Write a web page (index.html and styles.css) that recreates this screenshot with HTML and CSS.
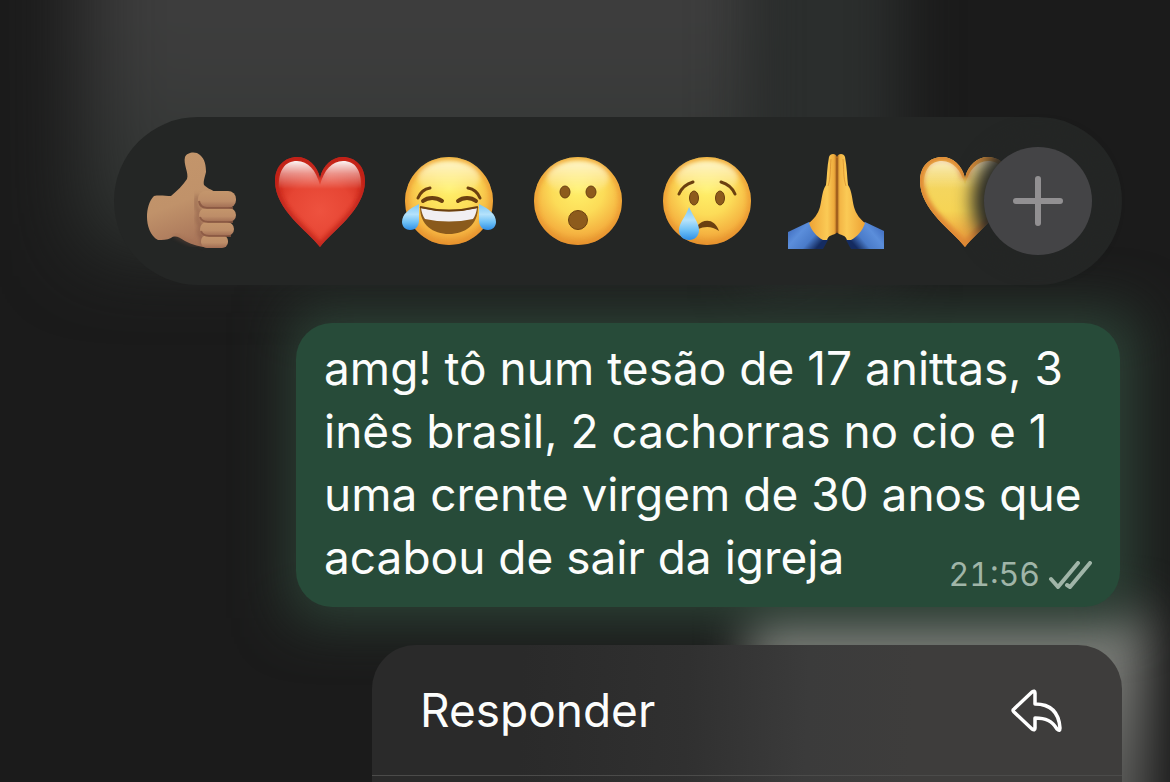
FILE: index.html
```html
<!DOCTYPE html>
<html lang="pt-BR">
<head>
<meta charset="utf-8">
<meta name="viewport" content="width=device-width, initial-scale=1">
<title>Mensagem</title>
<link rel="stylesheet" href="styles.css">
</head>
<body>
<div class="backdrop" aria-hidden="true">
  <div class="haze haze-top"></div>
  <div class="haze haze-teal"></div>
  <div class="haze haze-light"></div>
  <div class="haze haze-bubble"></div>
</div>
<svg class="defs" aria-hidden="true">
  <defs>
    <radialGradient id="face" cx="0.5" cy="0.36" r="0.66">
      <stop offset="0" stop-color="#fff16a"/><stop offset="0.45" stop-color="#fcdc58"/>
      <stop offset="0.78" stop-color="#f5b341"/><stop offset="1" stop-color="#e38c2c"/>
    </radialGradient>
    <linearGradient id="shine" x1="0" y1="0" x2="0" y2="1">
      <stop offset="0" stop-color="#fff" stop-opacity="0.9"/><stop offset="1" stop-color="#fff" stop-opacity="0"/>
    </linearGradient>
    <linearGradient id="heartGloss" x1="0" y1="0" x2="0" y2="1">
      <stop offset="0" stop-color="#fff" stop-opacity="0.95"/><stop offset="0.45" stop-color="#fff" stop-opacity="0.45"/><stop offset="1" stop-color="#fff" stop-opacity="0"/>
    </linearGradient>
    <radialGradient id="red" cx="0.5" cy="0.6" r="0.6">
      <stop offset="0" stop-color="#ee523f"/><stop offset="0.6" stop-color="#e64533"/><stop offset="1" stop-color="#cf2a1b"/>
    </radialGradient>
    <linearGradient id="gold" x1="0" y1="0" x2="0" y2="1">
      <stop offset="0" stop-color="#f2d76a"/><stop offset="0.6" stop-color="#f6d455"/><stop offset="1" stop-color="#ea8f36"/>
    </linearGradient>
    <linearGradient id="tear" x1="0" y1="0" x2="0" y2="1">
      <stop offset="0" stop-color="#7cc6f4"/><stop offset="0.4" stop-color="#b5e2fb"/><stop offset="0.7" stop-color="#6fc1f6"/><stop offset="1" stop-color="#2f8fe6"/>
    </linearGradient>
    <linearGradient id="skin" x1="0" y1="0" x2="0.3" y2="1">
      <stop offset="0" stop-color="#c4966b"/><stop offset="0.6" stop-color="#c0926a"/><stop offset="1" stop-color="#ab785b"/>
    </linearGradient>
    <linearGradient id="finger" x1="0" y1="0" x2="0" y2="1">
      <stop offset="0" stop-color="#c4966c"/><stop offset="0.6" stop-color="#bd8d68"/><stop offset="1" stop-color="#a06c53"/>
    </linearGradient>
    <linearGradient id="palmL" x1="0" y1="0" x2="1" y2="0">
      <stop offset="0" stop-color="#eda235"/><stop offset="0.65" stop-color="#fbca55"/><stop offset="0.9" stop-color="#eeaa3c"/><stop offset="1" stop-color="#a5601c"/>
    </linearGradient>
    <linearGradient id="palmR" x1="1" y1="0" x2="0" y2="0">
      <stop offset="0" stop-color="#eda235"/><stop offset="0.65" stop-color="#fbca55"/><stop offset="0.9" stop-color="#f3b545"/><stop offset="1" stop-color="#a5601c"/>
    </linearGradient>
    <linearGradient id="sleeveL" x1="0" y1="0" x2="1" y2="0.6">
      <stop offset="0" stop-color="#3560b4"/><stop offset="0.4" stop-color="#5b8edb"/><stop offset="0.7" stop-color="#4a7bc9"/><stop offset="0.95" stop-color="#142b60"/>
    </linearGradient>
    <linearGradient id="sleeveR" x1="1" y1="0" x2="0" y2="0.6">
      <stop offset="0" stop-color="#3560b4"/><stop offset="0.4" stop-color="#5b8edb"/><stop offset="0.7" stop-color="#4a7bc9"/><stop offset="0.95" stop-color="#142b60"/>
    </linearGradient>
    <filter id="soft" x="-20%" y="-20%" width="140%" height="140%"><feGaussianBlur stdDeviation="2"/></filter>
    <filter id="faint" x="-20%" y="-20%" width="140%" height="140%"><feGaussianBlur stdDeviation="0.7"/></filter>
    <clipPath id="faceClip"><circle cx="48" cy="48" r="44"/></clipPath>
    <path id="heart" d="M48 94C36 78 3 57 3 28C3 13 13 4 25 4C36 4 45 12 48 25C51 12 60 4 71 4C83 4 93 13 93 28C93 57 60 78 48 94Z"/>
    <path id="heartShine" d="M7 36C6 17 13 8 25 8C36 8 44 17 48 32C52 17 60 8 71 8C83 8 90 17 89 36Z"/>
    <clipPath id="heartClip"><use href="#heart"/></clipPath>
    <g id="head">
      <circle cx="48" cy="48" r="44" fill="url(#face)"/>
      <circle cx="48" cy="48" r="43" fill="none" stroke="#e8932e" stroke-width="4" opacity="0.7" filter="url(#soft)" clip-path="url(#faceClip)"/>
      <ellipse cx="48" cy="25" rx="31" ry="17" fill="url(#shine)" opacity="0.75" filter="url(#soft)"/>
    </g>
  </defs>
</svg>
<main class="overlay">
  <div class="reactions" role="toolbar" aria-label="Reações">
    <div class="emoji-list">
      <button class="emoji" type="button" aria-label="Joinha">
        <svg viewBox="0 0 96 96">
          <path fill="url(#skin)" d="M11 43C16 42 23 43 28 43C34 38 40 32 44 26C46 20 40 11 42 4C44-1 53-2 57 2C62 6 63 13 63 19C62 24 60 28 61 32C65 36 68 36 72 39L80 65L74 94C62 96 50 92 42 88C36 84 32 82 28 85C24 87 19 87 15 87C7 83 4 72 4 64C4 56 6 48 11 43Z"/>
          <path d="M31 82C36 84 44 91 58 92" fill="none" stroke="#94604a" stroke-width="3" opacity="0.4" filter="url(#soft)"/>
          <path d="M55 42C51 50 53 57 57 59C53 64 54 70 58 72C55 77 56 83 59 84V93" fill="none" stroke="#7d4e3d" stroke-width="3" opacity="0.6" filter="url(#soft)"/>
          <g fill="url(#finger)">
            <rect x="58" y="82" width="27" height="13" rx="6"/>
            <rect x="57" y="69" width="34" height="14" rx="7"/>
            <rect x="56" y="55" width="37" height="14" rx="7"/>
            <rect x="55" y="38" width="38" height="17" rx="8"/>
          </g>
          <g fill="none" stroke="#875541" stroke-width="2" filter="url(#faint)" opacity="0.8">
            <path d="M56 48Q57 55 64 55H90M57 64Q59 69 65 69H90M58 78Q60 83 66 83H88"/>
          </g>
        </svg>
      </button>
      <button class="emoji" type="button" aria-label="Coração vermelho">
        <svg viewBox="0 0 96 96">
          <use href="#heart" fill="url(#red)"/>
          <g clip-path="url(#heartClip)"><use href="#heart" fill="none" stroke="#b81c12" stroke-width="7" opacity="0.7" filter="url(#soft)"/></g>
          <use href="#heartShine" fill="url(#heartGloss)" filter="url(#faint)"/>
        </svg>
      </button>
      <button class="emoji" type="button" aria-label="Chorando de rir">
        <svg viewBox="0 0 96 96">
          <use href="#head"/>
          <g fill="none" stroke="#6b4010" stroke-width="3" stroke-linecap="round">
            <path d="M17 45C19 40 23 36 29 35M79 45C77 40 73 36 67 35"/>
            <path stroke-width="4" d="M22 48C27 44 35 44 41 48M57 48C62 44 70 44 75 48"/>
          </g>
          <path fill="#8a5a1c" d="M19 54Q48 61 77 54C77 72 64 81 48 81C32 81 19 72 19 54Z"/>
          <path fill="#f1eff2" d="M20 55Q48 62 76 55Q75 62 72 66Q48 71 24 66Q21 62 20 55Z"/>
          <path d="M19 54Q48 61 77 54" fill="none" stroke="#6b4010" stroke-width="2"/>
          <path fill="url(#tear)" d="M18 51C8 56 1 61 1 69C1 74 5 77 9 77C15 77 18 73 18 67Z"/>
          <path fill="url(#tear)" d="M78 51C88 56 95 61 95 69C95 74 91 77 87 77C81 77 78 73 78 67Z"/>
        </svg>
      </button>
      <button class="emoji" type="button" aria-label="Surpreso">
        <svg viewBox="0 0 96 96">
          <use href="#head"/>
          <g fill="#8d5b1c" stroke="#6b4010" stroke-width="1">
            <ellipse cx="35" cy="39" rx="5" ry="6"/><ellipse cx="61" cy="39" rx="5" ry="6"/>
            <circle cx="48" cy="67" r="9.5"/>
          </g>
        </svg>
      </button>
      <button class="emoji" type="button" aria-label="Chorando">
        <svg viewBox="0 0 96 96">
          <use href="#head"/>
          <path d="M20 41C23 34 27 31 34 29M76 41C73 34 69 31 62 29" fill="none" stroke="#6b4010" stroke-width="3" stroke-linecap="round"/>
          <g fill="#8d5b1c" stroke="#6b4010" stroke-width="1">
            <ellipse cx="35" cy="45" rx="4.500" ry="7"/><ellipse cx="61" cy="45" rx="4.500" ry="7"/>
          </g>
          <path fill="#6b4010" d="M38 73C45 65 56 66 60 78C53 73 46 73 39 76Z"/>
          <path fill="url(#tear)" d="M30 54C34 63 40 70 40 77C40 83 36 87 30 87C24 87 20 83 20 77C20 70 27 63 30 54Z"/>
        </svg>
      </button>
      <button class="emoji" type="button" aria-label="Mãos juntas">
        <svg viewBox="0 0 96 96">
          <path fill="url(#sleeveL)" d="M0 79L21 69L36 80L40 87L35 96H0Z"/>
          <path fill="url(#sleeveR)" d="M96 78L77 69L62 80L58 87L63 96H96Z"/>
          <path fill="url(#palmL)" d="M49 4C48 0 42 0 41 4C39 14 39 24 38 32C34 38 34 46 32 54C30 61 26 66 21 70C23 77 29 84 35 87L39 87C41 80 49 83 49 78Z"/>
          <path fill="url(#palmR)" d="M49 4C50 0 56 0 57 4C59 14 59 24 60 32C64 38 64 46 66 54C68 61 72 66 77 70C75 77 69 84 63 87L59 87C57 80 49 83 49 78Z"/>
          <path d="M49 5V80" stroke="#94541a" stroke-width="1"/>
          <path d="M43 6C42 16 43 24 40 33M55 6C56 16 55 24 58 33" fill="none" stroke="#d68c2c" stroke-width="1" opacity="0.7"/>
        </svg>
      </button>
      <button class="emoji" type="button" aria-label="Coração amarelo">
        <svg viewBox="0 0 96 96">
          <use href="#heart" fill="url(#gold)"/>
          <g clip-path="url(#heartClip)"><use href="#heart" fill="none" stroke="#e08a35" stroke-width="9" filter="url(#soft)"/></g>
          <use href="#heartShine" fill="url(#heartGloss)" opacity="0.6" filter="url(#faint)"/>
        </svg>
      </button>
    </div>
    <button class="more" type="button" aria-label="Mais reações">
      <svg viewBox="0 0 52 52"><path d="M26 4V48M4 26H48" fill="none" stroke="#929092" stroke-width="6" stroke-linecap="round"/></svg>
    </button>
  </div>

  <article class="bubble">
    <div class="message">amg! tô num tesão de 17 anittas, 3 inês brasil, 2 cachorras no cio e 1 uma crente virgem de 30 anos que acabou de sair da igreja
      <div class="meta">
        <time>21:56</time>
        <svg class="ticks" viewBox="0 0 44 28" role="img" aria-label="Entregue"><path d="M3 18L10 26L30 2M19 24L22 26L42 2" fill="none" stroke="currentColor" stroke-width="4" stroke-linecap="round" stroke-linejoin="round"/></svg>
      </div>
    </div>
  </article>

  <div class="menu" role="menu">
    <button class="item" type="button" role="menuitem">
      <span>Responder</span>
      <svg class="reply" viewBox="0 0 54 46"><path d="M4 22L22 5Q25 3 25 6V17C42 17 49 27 50 41Q50 45 47 42C42 34 36 31 25 31V41Q25 44 22 42L4 25Q2 23 4 22Z" fill="none" stroke="#fff" stroke-width="3.500" stroke-linejoin="round"/></svg>
    </button>
    <div class="rest"></div>
  </div>
</main>
</body>
</html>
```
FILE: styles.css
```css
* {
  box-sizing: border-box;
}

body {
  margin: 0;
  min-height: 100vh;
  background: #1b1b1b;
  color: #fcfdfc;
  font-family: Inter, "Liberation Sans", sans-serif;
}

button {
  border: 0;
  padding: 0;
  background: none;
  color: inherit;
  font: inherit;
}

svg {
  display: block;
}

.defs {
  position: absolute;
  width: 0;
  height: 0;
}

.backdrop {
  position: absolute;
  inset: 0;
  overflow: hidden;
}

.haze {
  position: absolute;
}

.haze-top {
  left: 7%;
  right: 32%;
  top: -20%;
  height: 52%;
  background: linear-gradient(#3d3d3d 50%, #373938 70%, #2c312e);
  filter: blur(40px);
}

.haze-teal {
  left: 64%;
  right: 23%;
  top: -10%;
  height: 46%;
  background: #2b2e2d;
  filter: blur(28px);
}

.haze-bubble {
  left: 25%;
  right: 3%;
  top: 40%;
  height: 39%;
  background: #2e4538;
  filter: blur(28px);
}

.haze-light {
  left: 64%;
  right: 2%;
  top: 78%;
  height: 40%;
  background: linear-gradient(#858782, #5a5a58 60%);
  filter: blur(24px);
}

.overlay {
  position: relative;
  display: flex;
  flex-direction: column;
  align-items: flex-end;
  gap: 38px;
  min-height: 100vh;
  padding: 117px 48px 0;
}

.reactions {
  display: flex;
  align-items: center;
  width: 100%;
  max-width: 1008px;
  height: 168px;
  padding: 0 30px 0 29px;
  border-radius: 84px;
  background: #242625;
}

.emoji-list {
  display: flex;
  flex: 1;
  gap: 33px;
  min-width: 0;
  margin-right: -30px;
  padding: 4px 0;
  overflow: hidden;
}

.emoji {
  flex: none;
  width: 96px;
  height: 96px;
}

.emoji svg {
  width: 96px;
  height: 96px;
  overflow: visible;
}

.more {
  position: relative;
  display: grid;
  flex: none;
  place-items: center;
  width: 108px;
  height: 108px;
  border-radius: 50%;
  background: #444446;
  box-shadow: 0 0 18px 12px #242625;
}

.more svg {
  width: 52px;
  height: 52px;
}

.bubble {
  width: 100%;
  max-width: 824px;
  margin-right: 2px;
  padding: 14px 28px 18px;
  border-radius: 36px;
  background: #274b39;
}

.message {
  font-size: 46px;
  line-height: 63px;
}

.meta {
  display: flex;
  float: right;
  align-items: flex-end;
  gap: 8px;
  height: 63px;
  color: #a0b5a8;
  font-size: 32px;
  font-variant-numeric: tabular-nums;
  line-height: 28px;
}

.ticks {
  width: 44px;
  height: 28px;
}

.menu {
  display: flex;
  flex: 1;
  flex-direction: column;
  width: 100%;
  max-width: 750px;
  border-radius: 44px 44px 0 0;
  background: linear-gradient(92deg, #2a2a2a 20%, #303030 42%, #3b3b3b 58%, #3e3d3c 72%);
  overflow: hidden;
}

.item {
  display: flex;
  align-items: center;
  justify-content: space-between;
  height: 131px;
  padding: 0 58px 0 48px;
  border-bottom: 1px solid #4b4b4a;
  font-size: 46px;
}

.reply {
  width: 54px;
  height: 46px;
}

.rest {
  flex: 1;
}
```
